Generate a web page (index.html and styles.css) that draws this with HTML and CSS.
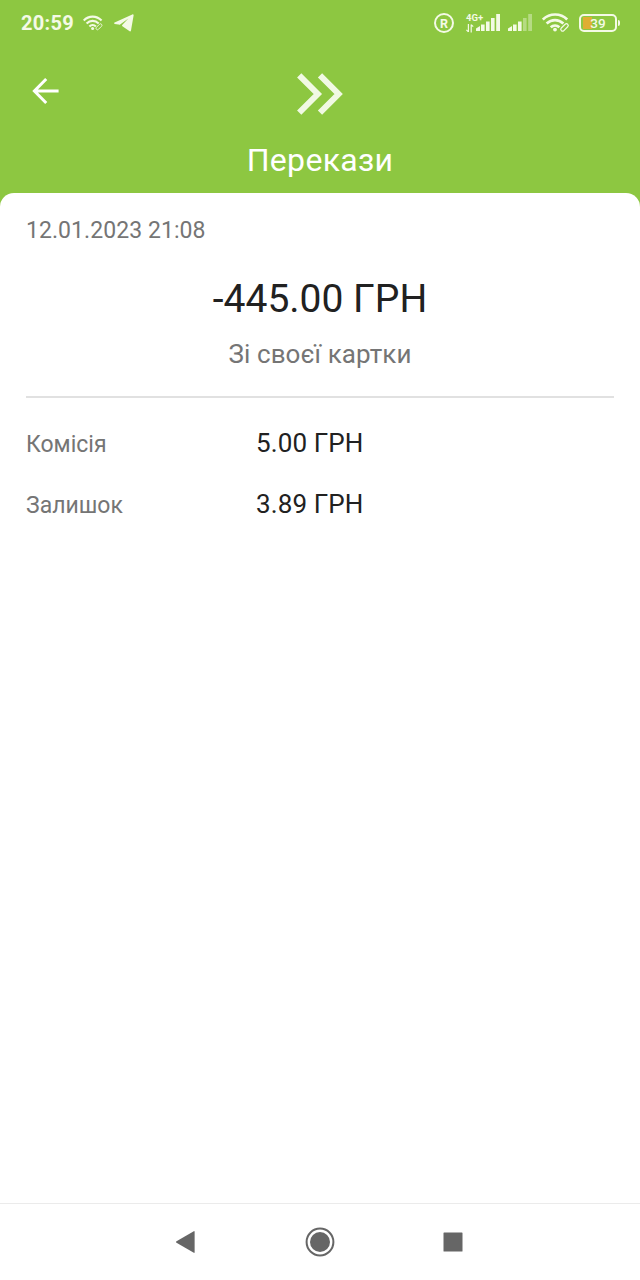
FILE: index.html
```html
<!DOCTYPE html>
<html lang="uk">
<head>
<meta charset="utf-8">
<title>Перекази</title>
<link rel="stylesheet" href="styles.css">
</head>
<body>

<div class="screen">
  <div class="status-bar">
    <span class="clock">20:59</span>
    <svg class="wifi-small" width="20" height="16" viewBox="0 0 28 22">
      <g fill="none" stroke="currentColor" stroke-width="2.9">
        <path d="M1 7.5C8 .2 19 .2 26 7.5M5 11.8c5-5 12-5 17 0M9 15.8c2.6-2.7 6.5-2.7 9 0"/>
      </g>
      <circle cx="13.5" cy="18.7" r="2.1" fill="currentColor"/>
      <rect x="17.4" y="14.3" width="10" height="4" rx="2" transform="rotate(-45 22.4 16.3)" class="link"/>
    </svg>
    <svg class="telegram" width="20" height="18" viewBox="0 0 20 18">
      <path fill="currentColor" d="M.6 8.6 18.3.4c.9-.4 1.5.1 1.3 1.1L17 16.4c-.2 1-.9 1.3-1.7.7L8.4 12.2c-.5-.4-.5-.9 0-1.4l6-6.2-8.3 5.8c-.5.4-1 .4-1.6.2L.7 9.9c-.8-.3-.8-.9-.1-1.3z"/>
    </svg>

    <div class="indicators">
      <span class="registered">R</span>
      <div class="network">
        <span>4G+</span>
        <svg width="8" height="9" viewBox="0 0 8 9">
          <path fill="none" stroke="currentColor" stroke-width="1.2" d="M2.4 0v8M.4 5.8l2 2M5.2 8.5v-8M7.2 2.7l-2-2"/>
        </svg>
      </div>
      <svg class="signal" width="24" height="18" viewBox="0 0 24 18" fill="currentColor">
        <path d="M0 14.5l4-2.5v5H0zM5 10.5h3.6V17H5zM10 7.5h3.6V17H10zM15 4h3.6v13H15zM20.2 0H24v17h-3.8z"/>
      </svg>
      <svg class="signal second" width="24" height="18" viewBox="0 0 24 18" fill="currentColor">
        <path d="M0 14.5l4-2.5v5H0zM5 10.5h3.6V17H5zM10 7.5h3.6V17H10z"/>
        <path opacity=".4" d="M15 4h3.6v13H15zM20.2 0H24v17h-3.8z"/>
      </svg>
      <svg class="wifi" width="28" height="20" viewBox="0 0 28 20">
        <g fill="none" stroke="currentColor" stroke-width="2.7">
          <path d="M.8 6.5C7.8-.2 18.5-.2 25.2 6.5M4.6 10.5c5-4.6 11.8-4.6 16.8 0M8.7 14.3c2.6-2.4 6.1-2.4 8.7 0"/>
        </g>
        <circle cx="13" cy="16.6" r="1.9" fill="currentColor"/>
        <rect x="18" y="12.6" width="9" height="3.6" rx="1.8" transform="rotate(-45 22.5 14.4)" class="link"/>
      </svg>
      <div class="battery"><span>39</span></div>
      <i class="battery-tip"></i>
    </div>
  </div>

  <header class="header">
    <svg class="back" width="28" height="28" viewBox="0 0 28 28">
      <path fill="none" stroke="currentColor" stroke-width="3" d="M14.2 2 2.4 14l11.8 12M2.6 14h24"/>
    </svg>
    <svg class="logo" width="46" height="42" viewBox="0 0 46 42">
      <path fill="none" stroke="currentColor" stroke-width="6" d="M2.2 2.4 20.8 21 2.2 39.6M23 2.4 41.6 21 23 39.6"/>
    </svg>
    <h1>Перекази</h1>
  </header>

  <main class="card">
    <div class="date">12.01.2023 21:08</div>
    <div class="amount">-445.00 ГРН</div>
    <div class="description">Зі своєї картки</div>
    <div class="details">
      <div class="row">
        <span class="label">Комісія</span>
        <span class="value">5.00 ГРН</span>
      </div>
      <div class="row">
        <span class="label">Залишок</span>
        <span class="value">3.89 ГРН</span>
      </div>
    </div>
  </main>

  <nav class="nav-bar">
    <svg width="20" height="22" viewBox="0 0 20 22">
      <path fill="currentColor" d="M.5 10.2 17.8.2c.4-.2.8 0 .8.5v20.6c0 .5-.4.7-.8.5L.5 11.8c-.6-.4-.6-1.2 0-1.6z"/>
    </svg>
    <svg width="30" height="30" viewBox="0 0 30 30">
      <circle cx="15" cy="15" r="13.4" fill="none" stroke="currentColor" stroke-width="2"/>
      <circle cx="15" cy="15" r="10" fill="currentColor"/>
    </svg>
    <svg width="20" height="20" viewBox="0 0 20 20">
      <rect x=".5" y=".5" width="19" height="19" rx=".6" fill="currentColor"/>
    </svg>
  </nav>
</div>

</body>
</html>
```
FILE: styles.css
```css
body {
    margin: 0;
    font-family: Roboto, "Liberation Sans", sans-serif;
    background-color: #8dc741;
}

.screen {
    display: flex;
    flex-direction: column;
    height: 1280px;
    width: 640px;
    overflow: hidden;
}

.status-bar {
    display: flex;
    align-items: center;
    height: 46px;
    padding: 0 21px;
    box-sizing: border-box;
    color: #f4fae6;
}

.clock {
    width: 62px;
    font-size: 20px;
    font-weight: 700;
    letter-spacing: 0.3px;
}

.telegram {
    margin-left: 11px;
}

.link {
    fill: #8dc741;
    stroke: currentColor;
    stroke-width: 1.2;
}

.indicators {
    display: flex;
    align-items: center;
    margin-left: auto;
}

.registered {
    width: 20px;
    height: 20px;
    box-sizing: border-box;
    border: 2px solid;
    border-radius: 50%;
    text-align: center;
    font-size: 12.5px;
    font-weight: 700;
    line-height: 17px;
}

.network {
    display: flex;
    flex-direction: column;
    width: 10px;
    height: 20px;
    margin-left: 12px;
    font-size: 9.5px;
    font-weight: 700;
    line-height: 9px;
    white-space: nowrap;
}

.network svg {
    margin-top: 2px;
}

.second {
    margin-left: 8px;
}

.wifi {
    margin-left: 10px;
}

.battery {
    width: 38px;
    height: 18px;
    margin-left: 9px;
    box-sizing: border-box;
    border: 2px solid;
    border-radius: 5px;
    background: linear-gradient(to right, #dfae32 9px, transparent 9px) no-repeat 2px 1px;
    background-size: 30px 12px;
    text-align: center;
    font-size: 13.5px;
    font-weight: 500;
    line-height: 15px;
}

.battery-tip {
    width: 2px;
    height: 6px;
    margin-left: 1px;
    margin-right: -1px;
    border-radius: 0 2px 2px 0;
    background-color: currentColor;
}

.header {
    display: grid;
    grid-template-columns: 1fr auto 1fr;
    grid-template-rows: 48px auto;
    height: 147px;
    padding: 27px 32px 0;
    box-sizing: border-box;
    color: #fff;
}

.back {
    margin-top: 4px;
}

.logo {
    color: #f1f9e3;
}

h1 {
    grid-column: 1 / 4;
    margin: 20px 0 0;
    text-align: center;
    font-size: 32px;
    font-weight: 400;
    line-height: 38px;
    letter-spacing: 0.3px;
}

.card {
    flex: 1;
    padding: 22px 26px 0;
    border-radius: 14px 14px 0 0;
    background-color: #fff;
}

.date {
    padding-top: 1px;
    color: #757575;
    font-size: 23px;
    line-height: 30px;
    letter-spacing: 0.06px;
}

.amount {
    margin-top: 29px;
    text-align: center;
    color: #212121;
    font-size: 39px;
    line-height: 48px;
}

.description {
    margin-top: 16px;
    text-align: center;
    color: #757575;
    font-size: 26px;
    line-height: 30px;
    letter-spacing: 0.08px;
}

.details {
    margin-top: 27px;
    padding-top: 15px;
    border-top: 2px solid #e1e1e1;
}

.row {
    display: flex;
    align-items: center;
    height: 61px;
}

.label {
    width: 230px;
    padding-top: 2px;
    color: #757575;
    font-size: 23px;
}

.value {
    padding-bottom: 2px;
    color: #212121;
    font-size: 26px;
    letter-spacing: 0.1px;
}

.nav-bar {
    display: flex;
    align-items: center;
    justify-content: space-between;
    height: 77px;
    padding: 0 177px 0 176px;
    box-sizing: border-box;
    border-top: 1px solid #ebebeb;
    background-color: #fff;
    color: #666;
}
```
